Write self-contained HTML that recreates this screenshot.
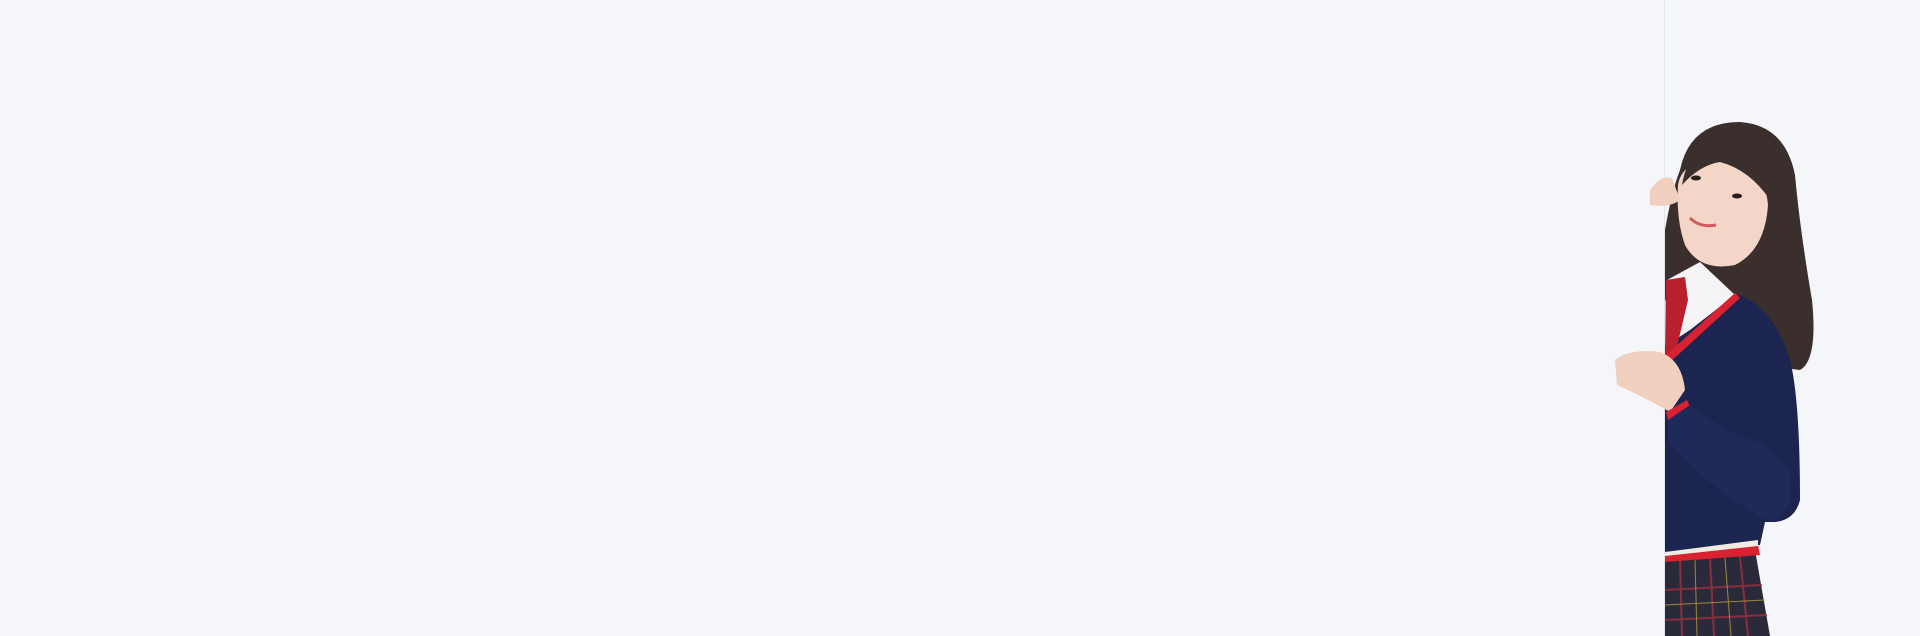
<!DOCTYPE html>
<html><head><style>
html,body{margin:0;padding:0;width:1920px;height:636px;overflow:hidden;background:#f4f6fa}
svg{position:absolute;left:0;top:0}
</style></head><body>
<svg width="1920" height="636" viewBox="0 0 1920 636">
<rect x="0" y="0" width="1920" height="636" fill="#f4f6fa"/>
<rect x="1664" y="0" width="1" height="636" fill="#e2e5ea"/>
<!-- hair back -->
<path d="M1680 170 Q1690 122 1740 122 Q1785 125 1795 175 Q1800 230 1812 300 Q1818 360 1800 370 L1760 365 L1700 330 L1665 300 L1665 230 Q1672 190 1680 170Z" fill="#3a2f2c"/>
<!-- skirt -->
<path d="M1665 555 L1755 550 L1770 636 L1665 636Z" fill="#2b2a3a"/>
<g stroke="#a03040" stroke-width="2" opacity=".8"><line x1="1680" y1="560" x2="1682" y2="636"/><line x1="1710" y1="558" x2="1714" y2="636"/><line x1="1740" y1="556" x2="1748" y2="636"/><line x1="1665" y1="590" x2="1762" y2="585"/><line x1="1665" y1="620" x2="1767" y2="615"/></g>
<g stroke="#c8b040" stroke-width="1" opacity=".7"><line x1="1695" y1="560" x2="1697" y2="636"/><line x1="1725" y1="558" x2="1731" y2="636"/><line x1="1665" y1="605" x2="1765" y2="600"/></g>
<!-- sweater -->
<path d="M1665 345 L1700 300 L1740 295 Q1775 310 1790 360 Q1800 400 1800 500 Q1795 520 1775 522 L1765 522 L1760 545 L1665 552Z" fill="#1c2550"/>
<path d="M1665 553 L1758 545 L1760 555 L1665 562Z" fill="#d82232"/>
<path d="M1665 552 L1758 540 L1758 546 L1665 556Z" fill="#f0ece4"/>
<!-- shirt and tie -->
<path d="M1667 280 L1700 262 L1735 295 L1690 330 L1667 345Z" fill="#f4f4f6"/>
<path d="M1666 280 L1685 277 L1688 300 L1675 355 L1665 356Z" fill="#b8202e"/>
<path d="M1665 356 L1735 293 L1740 298 L1668 364Z" fill="#d82232"/>
<!-- face -->
<path d="M1678 185 Q1682 160 1720 158 Q1765 165 1768 205 Q1765 250 1735 265 Q1700 272 1685 245 Q1676 220 1678 185Z" fill="#f3d6c8"/>
<path d="M1682 185 Q1690 135 1740 135 Q1775 140 1780 180 L1770 200 Q1750 170 1720 162 Q1700 165 1682 185Z" fill="#3a2f2c"/>
<ellipse cx="1696" cy="178" rx="5" ry="2.5" fill="#2a1e1a"/>
<ellipse cx="1737" cy="196" rx="5" ry="2.5" fill="#2a1e1a"/>
<path d="M1690 218 Q1700 228 1716 225" stroke="#d35a58" stroke-width="3" fill="none"/>
<!-- hands -->
<path d="M1650 190 Q1660 175 1672 178 L1680 200 Q1670 208 1650 205Z" fill="#f1cfbf"/>
<path d="M1615 360 Q1630 348 1660 352 Q1682 360 1685 390 L1670 412 Q1640 395 1617 385Z" fill="#f1cfbf"/>
<path d="M1666 412 L1687 400 L1690 407 L1668 420Z" fill="#d82232"/>
<!-- arm -->
<path d="M1668 420 L1690 405 Q1720 430 1765 445 L1790 470 Q1795 515 1770 520 Q1720 500 1668 440Z" fill="#1f2a58"/>
</svg>
</body></html>
